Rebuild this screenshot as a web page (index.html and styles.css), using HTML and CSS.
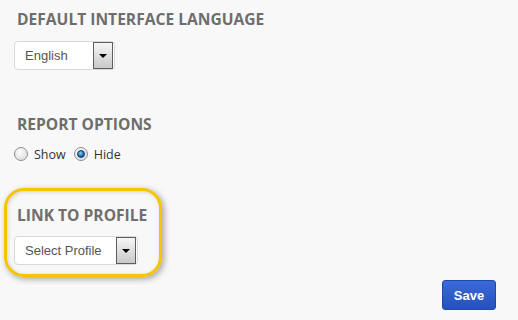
FILE: index.html
```html
<!DOCTYPE html>
<html>
<head>
  <meta charset="UTF-8">
  <link rel="stylesheet" href="styles.css">
  <title>Settings</title>
</head>
<body>
  <div class="settings">
    <h2 class="heading">DEFAULT INTERFACE LANGUAGE</h2>
    <div class="picker lang-picker">
      <span class="picker-text">English</span>
      <span class="picker-btn"><span class="caret"></span></span>
    </div>

    <h2 class="heading report-heading">REPORT OPTIONS</h2>
    <div class="radios">
      <span class="radio"></span>
      <label class="radio-label">Show</label>
      <span class="radio checked"><span class="dot"></span></span>
      <label class="radio-label">Hide</label>
    </div>

    <div class="highlight">
      <h2 class="heading">LINK TO PROFILE</h2>
      <div class="picker profile-picker">
        <span class="picker-text">Select Profile</span>
        <span class="picker-btn"><span class="caret"></span></span>
      </div>
    </div>

    <div class="actions">
      <button class="save-btn">Save</button>
    </div>
  </div>
</body>
</html>
```

FILE: styles.css
```css
* {
  margin: 0;
  padding: 0;
  box-sizing: border-box;
}

body {
  width: 100%;
  height: 100vh;
  overflow: hidden;
  background: #f8f8f8;
  font-family: "Open Sans", Arial, sans-serif;
}

.settings {
  padding: 9px 0 0 14px;
  display: flex;
  flex-direction: column;
  align-items: flex-start;
}

.heading {
  font-size: 15.6px;
  font-weight: bold;
  line-height: 20px;
  color: #6e6e6e;
  margin-left: 3px;
  white-space: nowrap;
}

/* dropdown box */
.picker {
  display: flex;
  align-items: center;
  justify-content: space-between;
  height: 29px;
  margin-top: 12px;
  padding: 0 1px 0 10px;
  background: #fff;
  border: 1px solid #d9d9d9;
  border-radius: 4px;
  font-family: "Liberation Sans", Arial, sans-serif;
  font-size: 13px;
  color: #555;
}

.lang-picker {
  width: 101px;
}

.profile-picker {
  width: 124px;
  margin-top: 11px;
}

.picker-btn {
  width: 20px;
  height: 27px;
  border: 1px solid #5e5e5e;
  background: linear-gradient(#f6f6f6, #c9c9c9);
  display: flex;
  align-items: center;
  justify-content: center;
}

.caret {
  width: 0;
  height: 0;
  border-left: 4px solid transparent;
  border-right: 4px solid transparent;
  border-top: 4px solid #000;
}

.report-heading {
  margin-top: 44px;
}

/* radio row */
.radios {
  display: flex;
  align-items: center;
  margin-top: 12px;
  height: 16px;
  font-size: 12.5px;
  color: #333;
}

.radio {
  width: 14px;
  height: 14px;
  border-radius: 50%;
  border: 1px solid #8e8e8e;
  background: radial-gradient(circle at 40% 35%, #fdfdfd, #d6d6d6);
  display: flex;
  align-items: center;
  justify-content: center;
}

.radio.checked {
  margin-left: 8px;
}

.dot {
  width: 8px;
  height: 8px;
  border-radius: 50%;
  border: 1px solid #0c3d66;
  background: radial-gradient(circle at 40% 35%, #8fd0ff, #1a73b8 55%, #0a3e6c);
}

.radio-label {
  margin-left: 6px;
}

/* highlighted block */
.highlight {
  width: 158px;
  margin: 26px 0 0 -10px;
  padding: 14px 0 9px 7px;
  border: 3px solid #f6c400;
  border-radius: 20px;
  box-shadow: 2px 2px 6px rgba(0, 0, 0, 0.35), inset 1px 1px 4px rgba(0, 0, 0, 0.15);
}

.actions {
  align-self: stretch;
  display: flex;
  justify-content: flex-end;
  padding-right: 22px;
  margin-top: 3px;
}

.save-btn {
  width: 54px;
  height: 30px;
  border: 1px solid #2048a8;
  border-radius: 3px;
  background: linear-gradient(#3a6ad8, #2451bd);
  color: #fff;
  font-family: "Liberation Sans", Arial, sans-serif;
  font-size: 13px;
  font-weight: bold;
  cursor: pointer;
}
```
